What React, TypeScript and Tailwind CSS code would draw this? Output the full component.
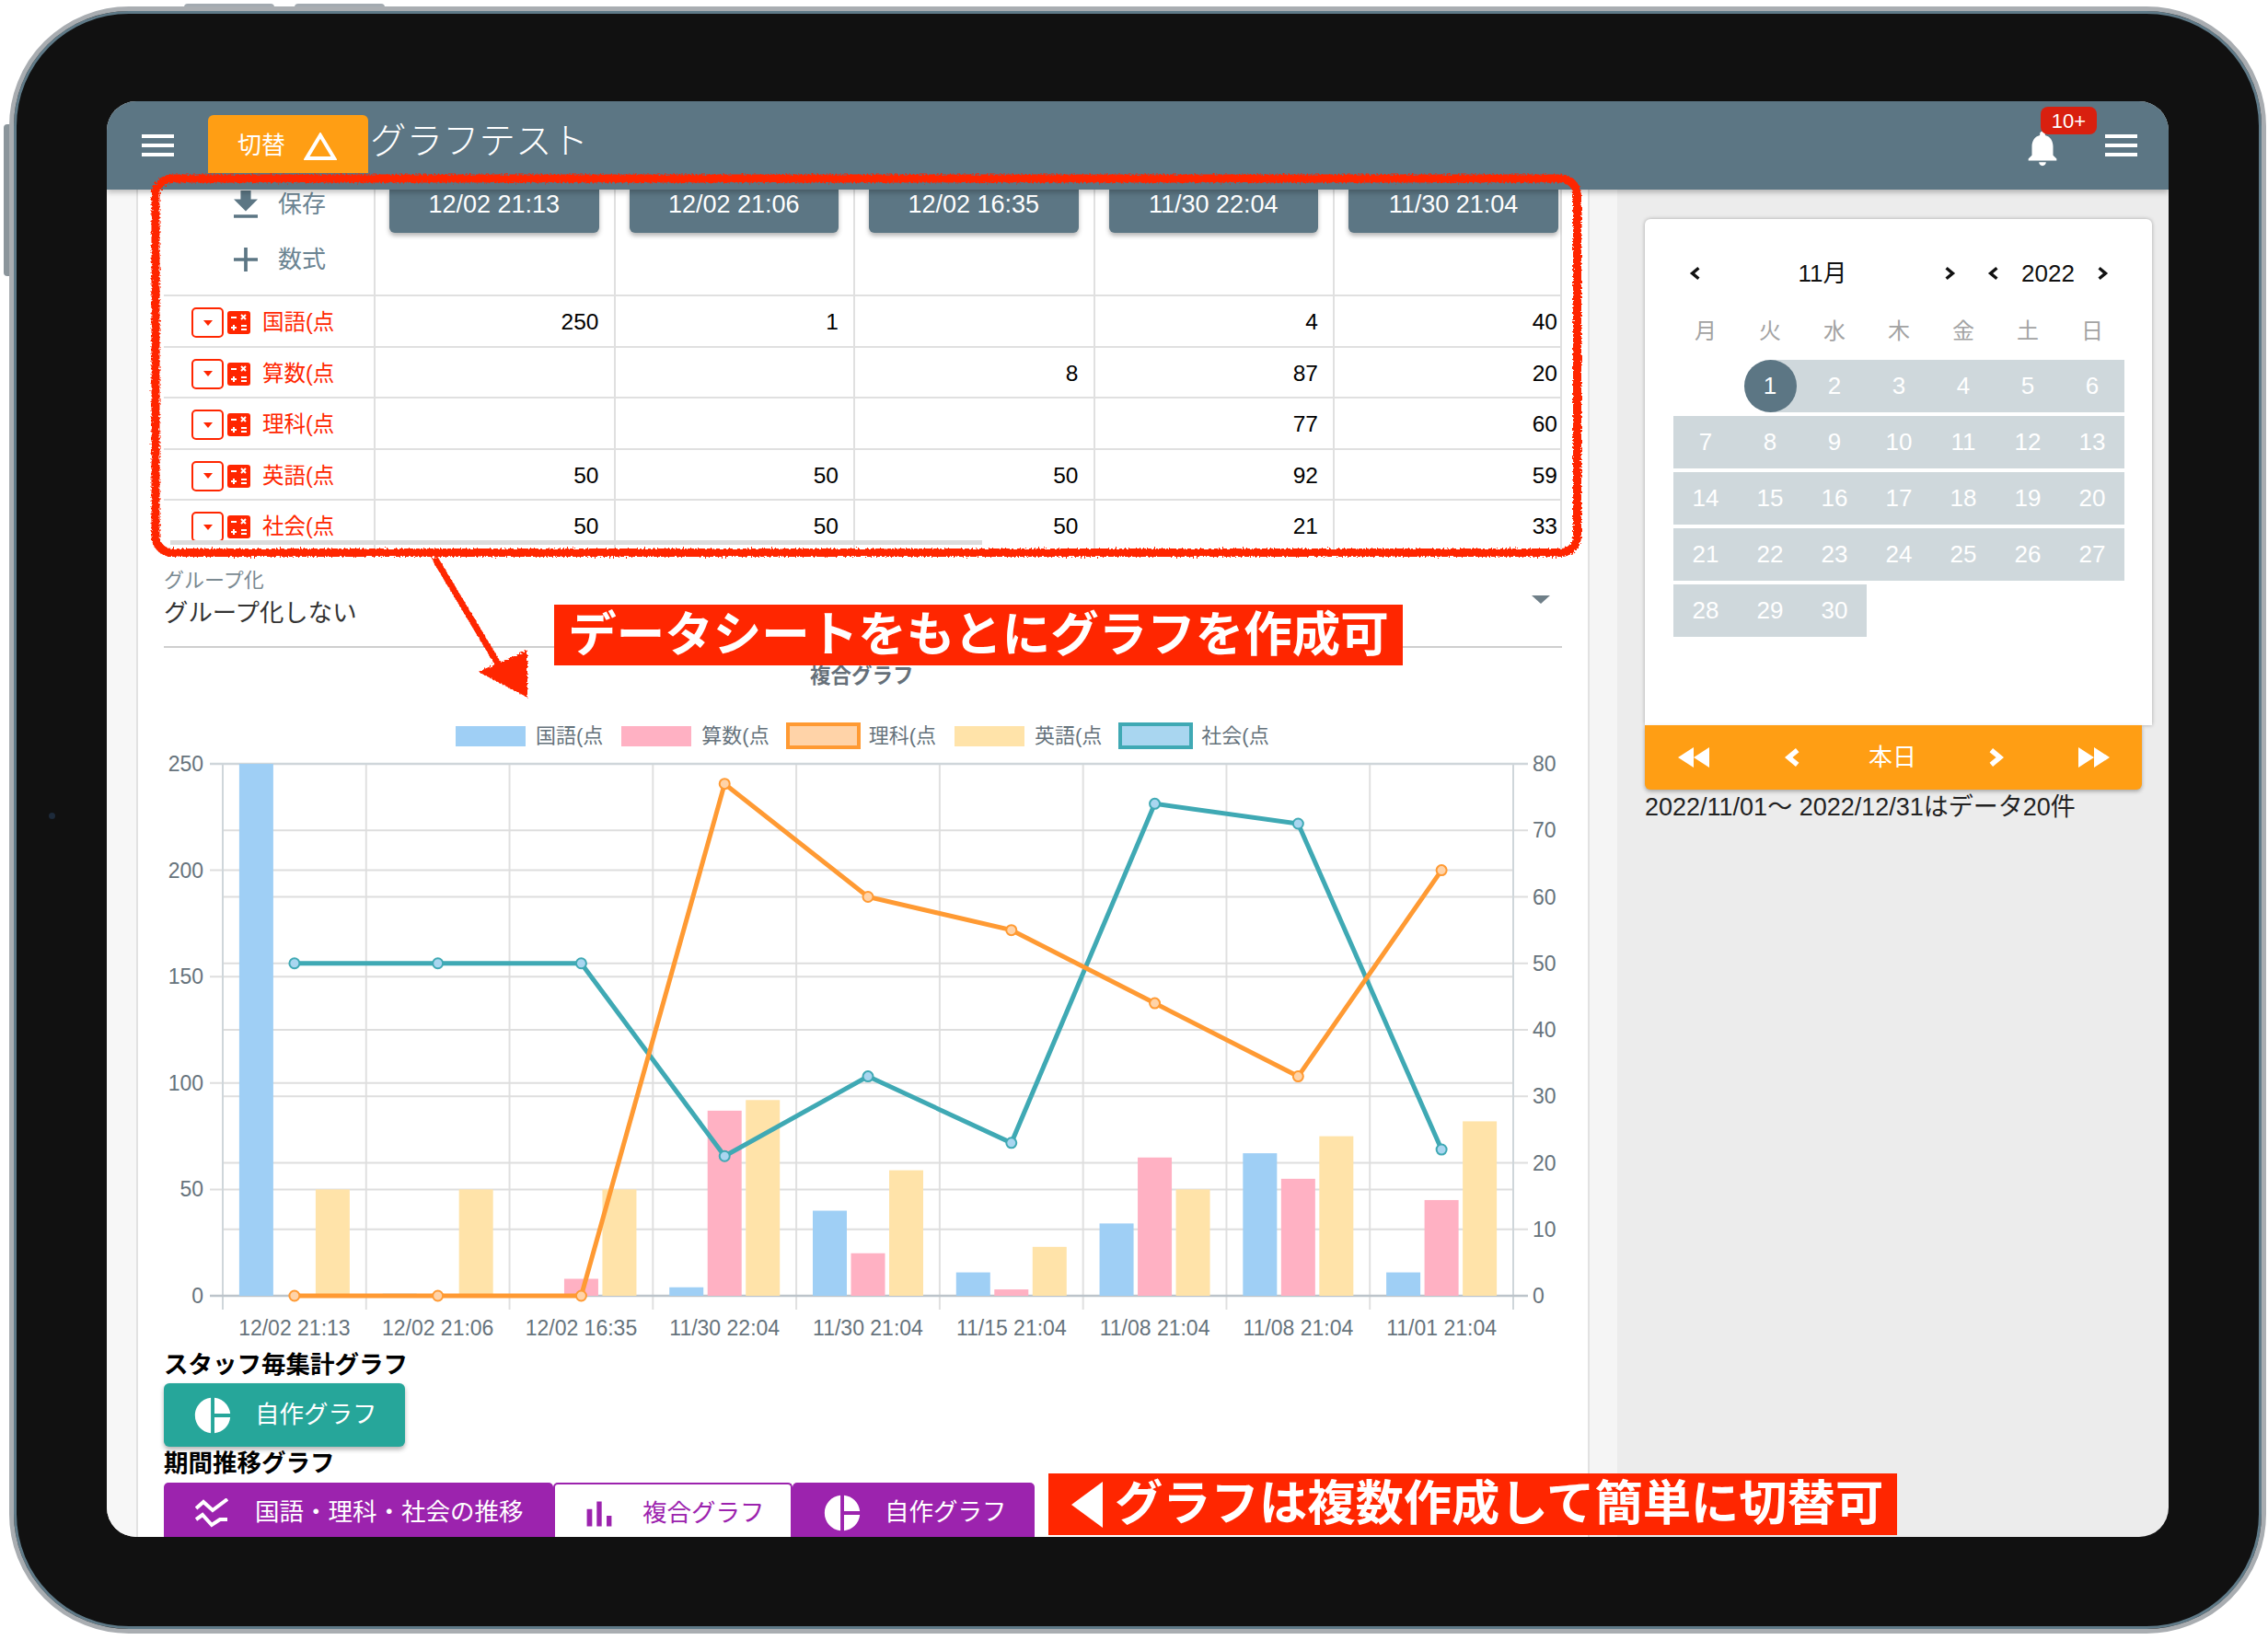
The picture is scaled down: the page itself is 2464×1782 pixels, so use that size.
import { Fragment } from "react"

const icons = {
  pie: "M11 2v20c-5.07-.5-9-4.79-9-10s3.93-9.5 9-10zm2.03 0v8.99H22c-.47-4.74-4.24-8.52-8.97-8.99zm0 11.01V22c4.74-.47 8.5-4.25 8.97-8.99h-8.97z",
  bars: "M5 9.2h3V19H5zM10.6 5h2.8v14h-2.8zm5.6 8H19v6h-2.8z",
  bell: "M12 22c1.1 0 2-.9 2-2h-4c0 1.1.89 2 2 2zm6-6v-5c0-3.07-1.64-5.64-4.5-6.32V4c0-.83-.67-1.5-1.5-1.5s-1.5.67-1.5 1.5v.68C7.63 5.36 6 7.92 6 11v5l-2 2v1h16v-1l-2-2z",
  download: "M19 9h-4V3H9v6H5l7 7 7-7zM5 18v2h14v-2H5z",
  plus: "M19 13h-6v6h-2v-6H5v-2h6V5h2v6h6v2z",
}

const Icon = ({ d, size, className }: { d: string; size: number; className?: string }) => (
  <svg viewBox="0 0 24 24" width={size} height={size} fill="currentColor" className={className}>
    <path d={d} />
  </svg>
)

const Burger = () => (
  <div className="flex w-[35px] flex-col gap-[6px]">
    <div className="h-[4px] bg-white" />
    <div className="h-[4px] bg-white" />
    <div className="h-[4px] bg-white" />
  </div>
)

const Chevron = ({ dir, size = 16, stroke = 3 }: { dir: "l" | "r"; size?: number; stroke?: number }) => (
  <svg viewBox="0 0 14 14" width={size} height={size} fill="none" stroke="currentColor" strokeWidth={stroke}>
    <path d={dir === "l" ? "M10 2 4 7l6 5" : "M4 2l6 5-6 5"} />
  </svg>
)

const Calc = () => (
  <svg viewBox="0 0 25 25" width={25} height={25}>
    <rect width="25" height="25" rx="3" fill="#ff2600" />
    <g stroke="#fff" strokeWidth="2" fill="none">
      <path d="M4 7h6M15 4l5 5M20 4l-5 5M7 15v6M4 18h6M15 16h6M15 20h6" />
    </g>
  </svg>
)

const rows = [
  { name: "国語(点", v: ["250", "1", "", "4", "40"] },
  { name: "算数(点", v: ["", "", "8", "87", "20"] },
  { name: "理科(点", v: ["", "", "", "77", "60"] },
  { name: "英語(点", v: ["50", "50", "50", "92", "59"] },
  { name: "社会(点", v: ["50", "50", "50", "21", "33"] },
]
const stamps = ["12/02 21:13", "12/02 21:06", "12/02 16:35", "11/30 22:04", "11/30 21:04"]

const DataSheet = () => (
  <div className="relative h-[394px] overflow-hidden">
    <div className="grid grid-cols-[228px_260.5px_260.5px_260.5px_260.5px_249px] border-r-2 border-[#e0e0e0]">
      <div className="flex h-[116px] flex-col gap-[28px] border-b-2 border-[#e0e0e0] pl-[76px] text-[26px] leading-[32px] text-[#6b8492]">
        <div className="flex items-center gap-[22px]">
          <svg viewBox="5 4 14 16" width={26} height={30} fill="#5c7684"><path d={icons.download} /></svg>
          <span>保存</span>
        </div>
        <div className="flex items-center gap-[22px]">
          <svg viewBox="5 5 14 14" width={26} height={26} fill="#5c7684"><path d={icons.plus} /></svg>
          <span>数式</span>
        </div>
      </div>
      {stamps.map((s, i) => (
        <div key={s} className={`h-[116px] border-b-2 border-l-2 border-[#e0e0e0] pl-[15px] ${i === 4 ? "pr-[4px]" : "pr-[16px]"}`}>
          <div className="h-[47px] rounded-b-md bg-[#5c7684] text-center text-[27px] leading-[32px] text-white shadow-[0_3px_5px_rgba(0,0,0,0.3)]">
            {s}
          </div>
        </div>
      ))}
      {rows.map((r) => (
        <Fragment key={r.name}>
          <div className="flex h-[55.5px] items-center border-b-2 border-[#e0e0e0] pl-[30px] pt-[4px]">
            <div className="mr-[4px] flex h-[33px] w-[35px] items-center justify-center rounded-[5px] border-2 border-[#ff2600]">
              <div className="h-0 w-0 border-x-[5px] border-t-[6px] border-x-transparent border-t-[#ff2600]" />
            </div>
            <Calc />
            <span className="ml-[13px] text-[23.5px] text-[#ff2600]">{r.name}</span>
          </div>
          {r.v.map((v, i) => (
            <div key={i} className={`flex h-[55.5px] items-center justify-end border-b-2 border-l-2 border-[#e0e0e0] pt-[4px] text-[24.5px] text-black ${i === 4 ? "pr-[5px]" : "pr-[16px]"}`}>
              {v}
            </div>
          ))}
        </Fragment>
      ))}
    </div>
    <div className="absolute left-[7px] top-[381px] h-[5px] w-[882px] bg-[#dcdcdc]" />
  </div>
)

const legend = [
  { name: "国語(点", box: "h-[22px] w-[76px] bg-[#9fcff5]" },
  { name: "算数(点", box: "h-[22px] w-[76px] bg-[#ffb1c3]" },
  { name: "理科(点", box: "-mx-[2px] h-[29px] w-[81px] border-[4px] border-[#ff9a33] bg-[#ffd3a8]" },
  { name: "英語(点", box: "h-[22px] w-[76px] bg-[#ffe3a9]" },
  { name: "社会(点", box: "-mx-[2px] h-[29px] w-[81px] border-[4px] border-[#3fa9b4] bg-[#a9d6f0]" },
]

const labels = ["12/02 21:13", "12/02 21:06", "12/02 16:35", "11/30 22:04", "11/30 21:04", "11/15 21:04", "11/08 21:04", "11/08 21:04", "11/01 21:04"]
const blue = [250, 1, 0, 4, 40, 11, 34, 67, 11]
const pink = [0, 0, 8, 87, 20, 3, 65, 55, 45]
const yellow = [50, 50, 50, 92, 59, 23, 50, 75, 82]
const orange = [0, 0, 0, 77, 60, 55, 44, 33, 64]
const teal = [50, 50, 50, 21, 33, 23, 74, 71, 22]

const L = 242
const R = 1644
const T = 830
const B = 1408
const step = (R - L) / 9
const cx = (i: number) => L + step * (i + 0.5)
const yLeft = (v: number) => B - ((B - T) * v) / 250
const yRight = (v: number) => B - ((B - T) * v) / 80

const ComboChart = () => {
  const bars = (data: number[], off: number, fill: string) =>
    data.map((v, i) =>
      v > 0 ? <rect key={i} x={cx(i) + off - 18.5} y={yLeft(v)} width={37} height={B - yLeft(v)} fill={fill} /> : null
    )
  const line = (data: number[], color: string, fill: string) => (
    <g>
      <polyline points={data.map((v, i) => `${cx(i)},${yRight(v)}`).join(" ")} fill="none" stroke={color} strokeWidth={5} />
      {data.map((v, i) => (
        <circle key={i} cx={cx(i)} cy={yRight(v)} r={5.5} fill={fill} stroke={color} strokeWidth={2} />
      ))}
    </g>
  )
  return (
    <svg viewBox="178 815 1519 653" width={1519} height={653} className="block">
      {Array.from({ length: 10 }, (_, i) => (
        <line key={i} x1={L + step * i} x2={L + step * i} y1={T} y2={B + 15} stroke="#e0e0e0" strokeWidth={2} />
      ))}
      {[50, 100, 150, 200].map((v) => (
        <line key={v} x1={L - 14} x2={R} y1={yLeft(v)} y2={yLeft(v)} stroke="#dedede" strokeWidth={2} />
      ))}
      {[10, 20, 30, 40, 50, 60, 70].map((v) => (
        <line key={v} x1={L} x2={R + 16} y1={yRight(v)} y2={yRight(v)} stroke="#dedede" strokeWidth={2} />
      ))}
      <line x1={L} x2={L} y1={T} y2={B + 15} stroke="#cfd6da" strokeWidth={2} />
      <line x1={R} x2={R} y1={T} y2={B + 15} stroke="#cfd6da" strokeWidth={2} />
      <line x1={L - 14} x2={R + 16} y1={T} y2={T} stroke="#cfd6da" strokeWidth={2.5} />
      <line x1={L - 14} x2={R + 16} y1={B} y2={B} stroke="#bcc4ca" strokeWidth={2.5} />
      {bars(blue, -41.5, "#9fcff5")}
      {bars(pink, 0, "#ffb1c3")}
      {bars(yellow, 41.5, "#ffe3a9")}
      {line(teal, "#3fa9b4", "#a9d6f0")}
      {line(orange, "#ff9a33", "#ffd3a8")}
      <g fontSize={23} fill="#66737c">
        {[0, 50, 100, 150, 200, 250].map((v) => (
          <text key={v} x={221} y={yLeft(v) + 8} textAnchor="end">{v}</text>
        ))}
        {[0, 10, 20, 30, 40, 50, 60, 70, 80].map((v) => (
          <text key={v} x={1665} y={yRight(v) + 8}>{v}</text>
        ))}
        {labels.map((t, i) => (
          <text key={i} x={cx(i)} y={1451} textAnchor="middle">{t}</text>
        ))}
      </g>
    </svg>
  )
}

const days = [
  ["", "1", "2", "3", "4", "5", "6"],
  ["7", "8", "9", "10", "11", "12", "13"],
  ["14", "15", "16", "17", "18", "19", "20"],
  ["21", "22", "23", "24", "25", "26", "27"],
  ["28", "29", "30"],
]

const Calendar = () => (
  <div className="h-[550px] w-[551px] rounded-t-md bg-white px-[31px] pt-[40px] shadow-[0_0_4px_rgba(0,0,0,0.3)]">
    <div className="flex h-[38px] items-center pl-[16px] text-[26px] text-[#111]">
      <div className="flex w-[292px] items-center justify-between">
        <Chevron dir="l" />
        <span>11月</span>
        <Chevron dir="r" />
      </div>
      <div className="ml-[32px] flex w-[134px] items-center justify-between">
        <Chevron dir="l" />
        <span>2022</span>
        <Chevron dir="r" />
      </div>
    </div>
    <div className="mt-[26px] grid h-[32px] w-[490px] grid-cols-7 items-center text-center text-[24px] text-[#a3a3a3]">
      {["月", "火", "水", "木", "金", "土", "日"].map((d) => (
        <span key={d}>{d}</span>
      ))}
    </div>
    <div className="mt-[17px] grid w-[490px] grid-cols-7 gap-y-[4px] text-[26px] text-white">
      {days.map((w, wi) =>
        w.map((d, di) =>
          d === "" ? (
            <div key={`${wi}-${di}`} />
          ) : d === "1" ? (
            <div key={d} className="flex h-[57px] items-center justify-center bg-[linear-gradient(to_right,transparent_50%,#cfd8dc_50%)]">
              <div className="flex h-[57px] w-[57px] items-center justify-center rounded-full bg-[#5c7684]">{d}</div>
            </div>
          ) : (
            <div key={d} className="flex h-[57px] items-center justify-center bg-[#cfd8dc]">{d}</div>
          )
        )
      )}
    </div>
  </div>
)

const DayNav = () => (
  <div className="flex h-[70px] w-[540px] items-center rounded-b-md bg-[#ff9e14] pl-[36px] text-white shadow-[0_2px_4px_rgba(0,0,0,0.3)]">
    <svg viewBox="0 0 34 22" width={34} height={22} fill="#fff"><path d="M17 0v22L0 11zM34 0v22L17 11z" /></svg>
    <div className="ml-[80px]"><Chevron dir="l" size={22} stroke={3.5} /></div>
    <span className="ml-[71px] text-[26px]">本日</span>
    <div className="ml-[75px]"><Chevron dir="r" size={22} stroke={3.5} /></div>
    <svg viewBox="0 0 34 22" width={34} height={22} fill="#fff" className="ml-[79px]"><path d="M0 0v22l17-11zM17 0v22l17-11z" /></svg>
  </div>
)

const tabClass = "flex h-[65px] items-center rounded-t-[5px] text-[26.5px]"

export default function App() {
  return (
    <div className="relative h-[1782px] w-[2464px] overflow-hidden bg-white font-['Liberation_Sans','Noto_Sans_CJK_JP',sans-serif]">
      <div className="absolute left-[200px] top-[4px] h-[6px] w-[98px] rounded-t-sm bg-[#a3aab0]" />
      <div className="absolute left-[320px] top-[4px] h-[6px] w-[98px] rounded-t-sm bg-[#a3aab0]" />
      <div className="absolute left-[4px] top-[135px] h-[165px] w-[7px] rounded-l-sm bg-[#8b959b]" />

      <div className="relative ml-[10px] mt-[7px] h-[1768px] w-[2452px] rounded-[130px] border-[5px] border-[#a9adb1] bg-[#111] pl-[101px] pt-[98px] shadow-[inset_0_0_0_3px_#5f7a88]">
        <div className="absolute left-[38px] top-[871px] h-[7px] w-[7px] rounded-full bg-[#1d2a3a]" />
        <div className="flex h-[1560px] w-[2240px] flex-col overflow-hidden rounded-[32px] bg-[#ececec]">
          <header className="relative z-10 flex h-[96px] shrink-0 items-center bg-[#5c7684] pl-[38px] pr-[34px] shadow-[0_3px_6px_rgba(0,0,0,0.25)]">
            <Burger />
            <div className="ml-[37px] mt-[15px] flex h-[63px] w-[174px] items-center self-start rounded-t-[6px] bg-[#ff9e14] pl-[32px] pt-[4px] text-[26px] text-white">
              <span>切替</span>
              <svg viewBox="0 0 36 30" width={36} height={30} fill="none" stroke="#fff" strokeWidth={4} className="ml-[20px]"><path d="M18 3 33 28H3z" /></svg>
            </div>
            <span className="mb-[8px] ml-[2px] text-[39.5px] font-light text-white">グラフテスト</span>
            <div className="relative ml-auto mr-[45px] mt-[6px] text-white">
              <Icon d={icons.bell} size={46} />
              <div className="absolute left-[21px] top-[-22px] flex h-[30px] w-[61px] items-center justify-center rounded-[8px] bg-[#d9200f] text-[22px]">10+</div>
            </div>
            <Burger />
          </header>

          <div className="flex min-h-0 flex-1">
            <div className="w-[32px] shrink-0 bg-[#f7f7f7]" />
            <main className="w-[1579px] shrink-0 border-x-2 border-[#e2e2e2] bg-white px-[28px]">
              <DataSheet />
              <div className="flex h-[104px] justify-between border-b-2 border-[#cfcfcf] pt-[19px]">
                <div>
                  <div className="text-[22px] leading-[24px] text-[#7b8a92]">グループ化</div>
                  <div className="mt-[6px] text-[26.4px] leading-[34px] text-[#333]">グループ化しない</div>
                </div>
                <div className="mr-[13px] mt-[28px] h-0 w-0 border-x-[10px] border-t-[9px] border-x-transparent border-t-[#6f7f88]" />
              </div>
              <div className="mt-[16px] h-[30px] pl-[702px] text-[22.5px] font-bold leading-[30px] text-[#667079]">複合グラフ</div>
              <div className="mt-[36px] flex h-[29px] items-center gap-[20px] pb-[2px] pl-[317px] text-[22px] text-[#66737c]">
                {legend.map((l) => (
                  <div key={l.name} className="flex items-center gap-[11px]">
                    <div className={l.box} />
                    <span>{l.name}</span>
                  </div>
                ))}
              </div>
              <ComboChart />
              <div className="text-[26.5px] font-bold leading-[30px] text-black">スタッフ毎集計グラフ</div>
              <div className="mt-[5px] flex h-[69px] w-[262px] items-center rounded-[6px] bg-[#26a69a] pl-[30px] text-[26.5px] text-white shadow-[0_3px_5px_rgba(0,0,0,0.3)]">
                <Icon d={icons.pie} size={46} />
                <span className="ml-[23px]">自作グラフ</span>
              </div>
              <div className="mt-[3px] text-[26.5px] font-bold leading-[30px] text-black">期間推移グラフ</div>
              <div className="mt-[6px] flex">
                <div className={`${tabClass} w-[423px] bg-[#9c23ae] pl-[34px] text-white`}>
                  <svg viewBox="0 0 36 32" width={36} height={32} fill="none" stroke="currentColor" strokeWidth={4}>
                    <path d="M1 11 9 4l10 9 16-12M1 23l7-5 10 11 9-6h8" />
                  </svg>
                  <span className="ml-[29px]">国語・理科・社会の推移</span>
                </div>
                <div className={`${tabClass} w-[260px] border-x-2 border-t-2 border-[#9c23ae] bg-white pl-[25px] text-[#9c23ae]`}>
                  <Icon d={icons.bars} size={46} />
                  <span className="ml-[24px]">複合グラフ</span>
                </div>
                <div className={`${tabClass} w-[263px] bg-[#9c23ae] pl-[31px] text-white`}>
                  <Icon d={icons.pie} size={46} />
                  <span className="ml-[23px]">自作グラフ</span>
                </div>
              </div>
            </main>
            <div className="w-[30px] shrink-0 bg-[#f5f5f5]" />
            <aside className="min-w-0 flex-1 pl-[30px] pt-[32px]">
              <Calendar />
              <DayNav />
              <div className="mt-[3px] whitespace-nowrap text-[27px] leading-[32px] text-[#222]">2022/11/01～ 2022/12/31はデータ20件</div>
            </aside>
          </div>
        </div>
      </div>

      <svg viewBox="0 0 2464 1782" width={2464} height={1782} className="pointer-events-none absolute left-0 top-0 z-20">
        <defs>
          <filter id="rough" filterUnits="userSpaceOnUse" x="0" y="0" width="2464" height="1782">
            <feTurbulence type="fractalNoise" baseFrequency="0.5" numOctaves="2" seed="3" />
            <feDisplacementMap in="SourceGraphic" scale="6" />
          </filter>
        </defs>
        <g filter="url(#rough)" fill="none" stroke="#ff2600">
          <rect x="169" y="194" width="1544.5" height="406.5" rx="18" strokeWidth="9" />
          <path d="M472 606 545 728" strokeWidth="7" />
          <path d="M522 730 572 708v48z" fill="#ff2600" strokeWidth="2" />
        </g>
      </svg>

      <div className="absolute left-[602px] top-[657px] z-30 flex h-[66px] w-[922px] items-center justify-center bg-[#ff2600] text-[52.5px] font-bold text-white">
        データシートをもとにグラフを作成可
      </div>
      <div className="absolute left-[1139px] top-[1601px] z-30 flex h-[67px] w-[922px] items-center bg-[#ff2600] pl-[25px] text-[52.3px] font-bold text-white">
        <svg viewBox="0 0 34 50" width={34} height={50} fill="#fff"><path d="M34 0v50L0 25z" /></svg>
        <span className="ml-[13px]">グラフは複数作成して簡単に切替可</span>
      </div>
    </div>
  )
}
